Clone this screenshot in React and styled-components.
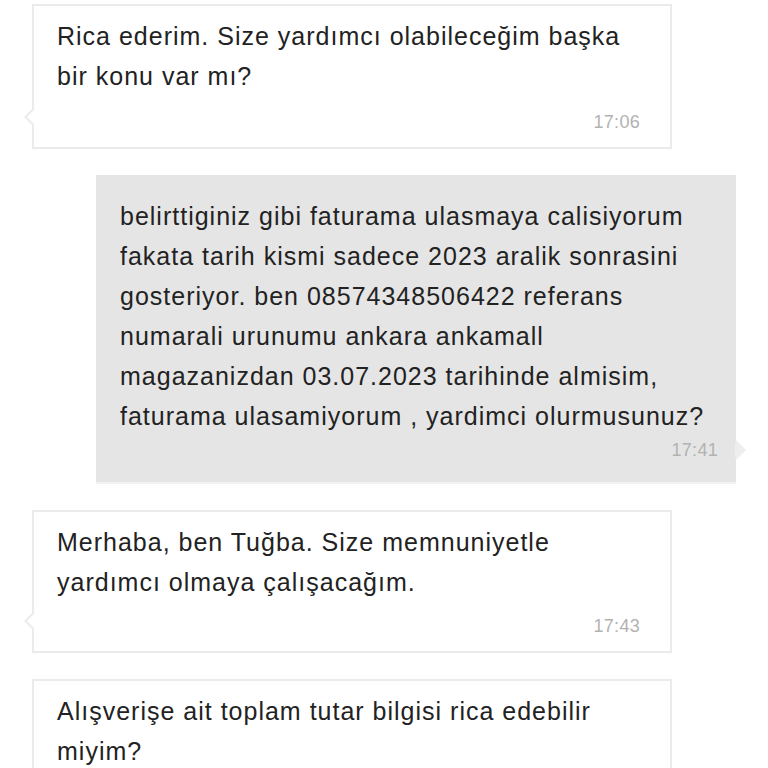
import styled, { createGlobalStyle } from 'styled-components';

const GlobalStyle = createGlobalStyle`
  html, body {
    margin: 0;
    padding: 0;
    background: #ffffff;
  }
  body {
    font-family: "Liberation Sans", Arial, sans-serif;
    color: #222222;
  }
`;

const Chat = styled.div`
  display: flex;
  flex-direction: column;
  padding: 4px 0 0 0;
  gap: 26px;
  height: 768px;
  overflow: hidden;
`;

const Row = styled.div`
  display: flex;
  justify-content: ${(p) => (p.$mine ? 'flex-end' : 'flex-start')};
  padding: ${(p) => (p.$mine ? '0 32px 0 0' : '0 0 0 32px')};
`;

const Bubble = styled.div`
  position: relative;
  box-sizing: border-box;
  width: 640px;
  padding: ${(p) => (p.$mine ? '21px 18px 22px 24px' : '10px 30px 15px 23px')};
  background: ${(p) => (p.$mine ? '#e5e5e5' : '#ffffff')};
  border: ${(p) => (p.$mine ? 'none' : '2px solid #ebebeb')};
  border-bottom: ${(p) => (p.$mine ? '2px solid #f2f2f2' : '2px solid #ebebeb')};

  &::before {
    content: '';
    position: absolute;
    bottom: ${(p) => (p.$mine ? '22px' : '20px')};
    ${(p) => (p.$mine ? 'right: -10px;' : 'left: -10px;')}
    width: 0;
    height: 0;
    border-top: 10px solid transparent;
    border-bottom: 10px solid transparent;
    ${(p) =>
      p.$mine
        ? 'border-left: 10px solid #eeeeee;'
        : 'border-right: 10px solid #ececec;'}
  }

  &::after {
    content: '';
    position: absolute;
    bottom: ${(p) => (p.$mine ? '24px' : '22px')};
    ${(p) => (p.$mine ? 'right: -7px;' : 'left: -7px;')}
    width: 0;
    height: 0;
    border-top: 8px solid transparent;
    border-bottom: 8px solid transparent;
    ${(p) =>
      p.$mine
        ? 'border-left: 8px solid #eeeeee;'
        : 'border-right: 8px solid #ffffff;'}
  }
`;

const Text = styled.p`
  margin: 0;
  font-size: 25px;
  line-height: 40px;
  letter-spacing: 1px;
  color: #222222;
`;

const Time = styled.div`
  margin-top: ${(p) => p.$gap || 14}px;
  text-align: right;
  font-size: 18px;
  line-height: 20px;
  letter-spacing: 0.3px;
  color: #b2b2b2;
`;

const messages = [
  {
    mine: false,
    lines: ['Rica ederim. Size yardımcı olabileceğim başka', 'bir konu var mı?'],
    time: '17:06',
    gap: 16,
  },
  {
    mine: true,
    lines: [
      'belirttiginiz gibi faturama ulasmaya calisiyorum',
      'fakata tarih kismi sadece 2023 aralik sonrasini',
      'gosteriyor. ben 08574348506422 referans',
      'numarali urunumu ankara ankamall',
      'magazanizdan 03.07.2023 tarihinde almisim,',
      'faturama ulasamiyorum , yardimci olurmusunuz?',
    ],
    time: '17:41',
    gap: 4,
  },
  {
    mine: false,
    lines: ['Merhaba, ben Tuğba. Size memnuniyetle', 'yardımcı olmaya çalışacağım.'],
    time: '17:43',
    gap: 14,
  },
  {
    mine: false,
    lines: ['Alışverişe ait toplam tutar bilgisi rica edebilir', 'miyim?'],
    time: '17:44',
    gap: 14,
  },
];

const App = () => {
  return (
    <>
      <GlobalStyle />
      <Chat>
        {messages.map((m, i) => (
          <Row key={i} $mine={m.mine}>
            <Bubble $mine={m.mine}>
              <Text>
                {m.lines.map((l, j) => (
                  <span key={j}>
                    {l}
                    {j < m.lines.length - 1 && <br />}
                  </span>
                ))}
              </Text>
              <Time $gap={m.gap}>{m.time}</Time>
            </Bubble>
          </Row>
        ))}
      </Chat>
    </>
  );
};

export default App;
